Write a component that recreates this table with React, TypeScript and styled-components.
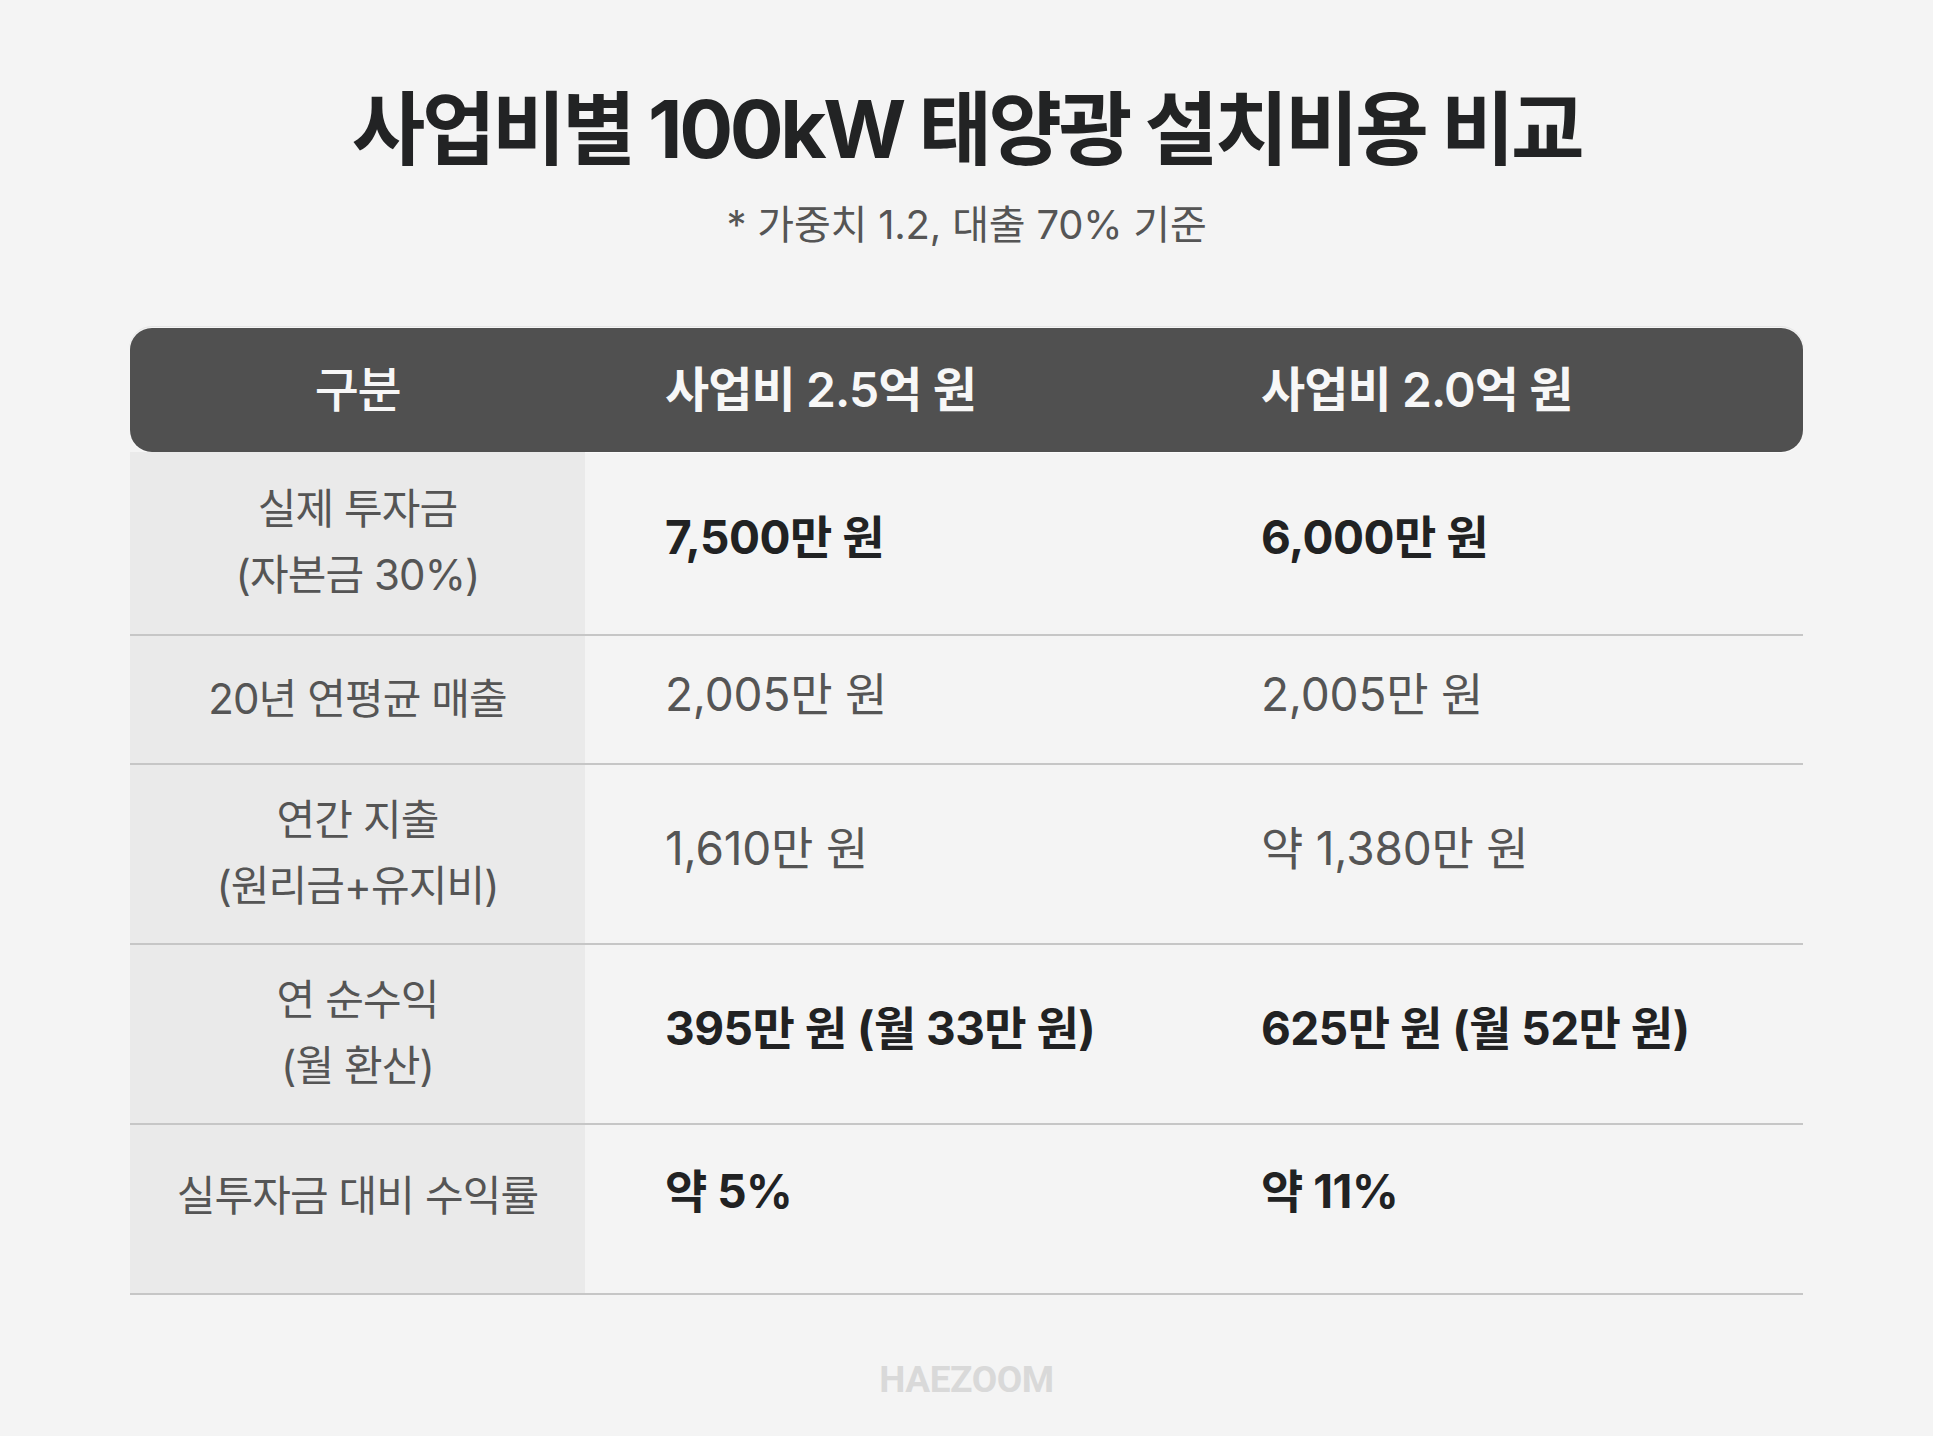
import React from "react";
import styled, { createGlobalStyle } from "styled-components";

const Global = createGlobalStyle`
  html, body { margin: 0; padding: 0; background: #f4f4f4; }
  body { font-family: Inter, "Noto Sans CJK KR", "Noto Sans", sans-serif; }
`;

const COLS = "455px 596px 1fr";

const Page = styled.div`
  width: 1933px;
  min-height: 1436px;
  box-sizing: border-box;
  padding-top: 81px;
  display: flex;
  flex-direction: column;
  align-items: center;
  background: #f4f4f4;
`;

const Title = styled.h1`
  margin: 0;
  font-size: 80px;
  line-height: 96px;
  font-weight: 700;
  color: #222324;
  letter-spacing: -3.4px;
  text-align: center;
  white-space: nowrap;
`;

const Subtitle = styled.p`
  margin: 22px 0 0;
  font-size: 40px;
  line-height: 52px;
  font-weight: 400;
  color: #555555;
  letter-spacing: -0.2px;
  text-align: center;
  white-space: nowrap;
`;

const Table = styled.div`
  width: 1673px;
  margin-top: 77px;
  display: flex;
  flex-direction: column;
`;

const HeaderRow = styled.div`
  display: grid;
  grid-template-columns: ${COLS};
  height: 124px;
  background: #505050;
  border-radius: 22px;
  align-items: center;
  box-shadow: 0 0 0 1px rgba(255, 255, 255, 0.6), 0 -1px 0 1px rgba(0, 0, 0, 0.06);
`;

const HeadCell = styled.div<{ $center?: boolean; $weight?: number }>`
  font-size: 48px;
  line-height: 60px;
  font-weight: ${(p) => p.$weight ?? 600};
  color: #f7f7f7;
  letter-spacing: ${(p) => (p.$center ? "-1.5px" : "-0.9px")};
  white-space: nowrap;
  text-align: ${(p) => (p.$center ? "center" : "left")};
  padding-left: ${(p) => (p.$center ? "0" : "80px")};
`;

const Row = styled.div<{ $h: number }>`
  display: grid;
  grid-template-columns: ${COLS};
  height: ${(p) => p.$h}px;
  box-sizing: border-box;
  border-bottom: 2px solid #c6c6c6;
`;

const LabelCell = styled.div<{ $pb?: number }>`
  background: #eaeaea;
  display: flex;
  align-items: center;
  justify-content: center;
  text-align: center;
  box-sizing: border-box;
  padding-bottom: ${(p) => (p.$pb ?? 0) + 2}px;
  font-size: 42px;
  line-height: 66px;
  font-weight: 400;
  letter-spacing: -0.9px;
  white-space: nowrap;
  color: #555555;
`;

const ValueCell = styled.div<{ $bold?: boolean; $pb?: number }>`
  display: flex;
  align-items: center;
  box-sizing: border-box;
  padding-left: 80px;
  padding-bottom: ${(p) => (p.$pb ?? 0) + 12}px;
  font-size: 46px;
  line-height: 60px;
  letter-spacing: ${(p) => (p.$bold ? "-0.5px" : "-0.2px")};
  white-space: nowrap;
  font-weight: ${(p) => (p.$bold ? 700 : 400)};
  color: ${(p) => (p.$bold ? "#212223" : "#555555")};
`;

const Logo = styled.div`
  margin-top: 63px;
  font-family: Roboto, "Liberation Sans", sans-serif;
  font-weight: 700;
  font-size: 37px;
  line-height: 44px;
  letter-spacing: -0.4px;
  color: #d9d9d9;
`;

type RowData = {
  label: React.ReactNode;
  a: string;
  b: string;
  bold: boolean;
  h: number;
  pb?: number;
};

const rows: RowData[] = [
  { label: <>실제 투자금<br />(자본금 30%)</>, a: "7,500만 원", b: "6,000만 원", bold: true, h: 184 },
  { label: "20년 연평균 매출", a: "2,005만 원", b: "2,005만 원", bold: false, h: 129 },
  { label: <>연간 지출<br />(원리금+유지비)</>, a: "1,610만 원", b: "약 1,380만 원", bold: false, h: 180 },
  { label: <>연 순수익<br />(월 환산)</>, a: "395만 원 (월 33만 원)", b: "625만 원 (월 52만 원)", bold: true, h: 180 },
  { label: "실투자금 대비 수익률", a: "약 5%", b: "약 11%", bold: true, h: 170, pb: 24 },
];

export default function App() {
  return (
    <>
      <Global />
      <Page>
        <Title>사업비별 100kW 태양광 설치비용 비교</Title>
        <Subtitle>* 가중치 1.2, 대출 70% 기준</Subtitle>
        <Table>
          <HeaderRow>
            <HeadCell $center $weight={500}>구분</HeadCell>
            <HeadCell>사업비 2.5억 원</HeadCell>
            <HeadCell>사업비 2.0억 원</HeadCell>
          </HeaderRow>
          {rows.map((r, i) => (
            <Row key={i} $h={r.h}>
              <LabelCell $pb={r.pb}>
                <span>{r.label}</span>
              </LabelCell>
              <ValueCell $bold={r.bold} $pb={r.pb}>{r.a}</ValueCell>
              <ValueCell $bold={r.bold} $pb={r.pb}>{r.b}</ValueCell>
            </Row>
          ))}
        </Table>
        <Logo>HAEZOOM</Logo>
      </Page>
    </>
  );
}
